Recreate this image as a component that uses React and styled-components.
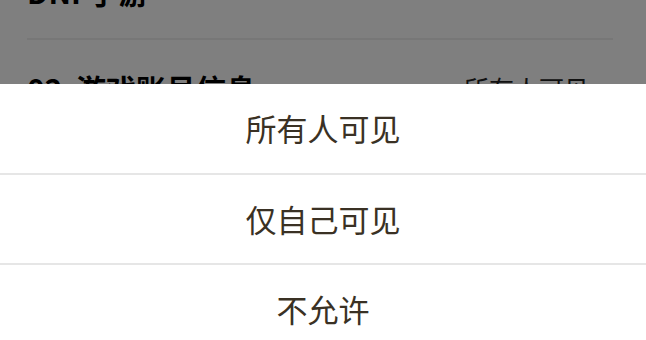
import React from 'react';
import styled, { createGlobalStyle } from 'styled-components';

const GlobalStyle = createGlobalStyle`
  html, body {
    margin: 0;
    padding: 0;
    background: #ffffff;
  }
  body {
    font-family: "Noto Sans CJK SC", "Noto Sans", sans-serif;
  }
`;

const Screen = styled.div`
  position: relative;
  width: 646px;
  height: 340px;
  overflow: hidden;
  background: #ffffff;
`;

const Page = styled.div`
  padding: 0 33px 0 27px;
`;

const Section = styled.div`
  display: flex;
  align-items: center;
  justify-content: space-between;
  height: 40px;
  margin-top: ${(p) => p.$offset || 0}px;
  padding-bottom: ${(p) => p.$bottom || 0}px;
  border-bottom: ${(p) => (p.$divided ? '2px solid #eeeeee' : 'none')};
`;

const Title = styled.span`
  font-size: 30px;
  font-weight: 700;
  color: #000000;
  line-height: 40px;
`;

const Value = styled.span`
  display: flex;
  align-items: center;
  gap: 10px;
  font-size: 25px;
  color: #222222;
`;

// dim layer over the page behind the action sheet
const Overlay = styled.div`
  position: absolute;
  inset: 0;
  background: rgba(0, 0, 0, 0.5);
`;

const Sheet = styled.div`
  position: absolute;
  left: 0;
  right: 0;
  top: 84px;
  bottom: 0;
  background: #ffffff;
  display: flex;
  flex-direction: column;
`;

const Option = styled.button`
  flex: none;
  height: ${(p) => (p.$first ? 89 : 90)}px;
  border: none;
  border-top: ${(p) => (p.$first ? 'none' : '2px solid #e6e6e6')};
  background: #ffffff;
  padding: 0 0 2px;
  font-family: "Noto Sans CJK SC", "Noto Sans", sans-serif;
  font-size: 31px;
  color: #3a3124;
  cursor: pointer;
  box-sizing: border-box;
`;

const options = ['所有人可见', '仅自己可见', '不允许'];

export default function App() {
  return (
    <Screen>
      <GlobalStyle />
      <Page>
        <Section $offset={-29} $bottom={27} $divided>
          <Title>DNF手游</Title>
        </Section>
        <Section $offset={28}>
          <Title>02&nbsp; 游戏账号信息</Title>
          <Value>
            所有人可见 <span>&gt;</span>
          </Value>
        </Section>
      </Page>
      <Overlay />
      <Sheet>
        {options.map((label, i) => (
          <Option key={label} $first={i === 0}>
            {label}
          </Option>
        ))}
      </Sheet>
    </Screen>
  );
}
